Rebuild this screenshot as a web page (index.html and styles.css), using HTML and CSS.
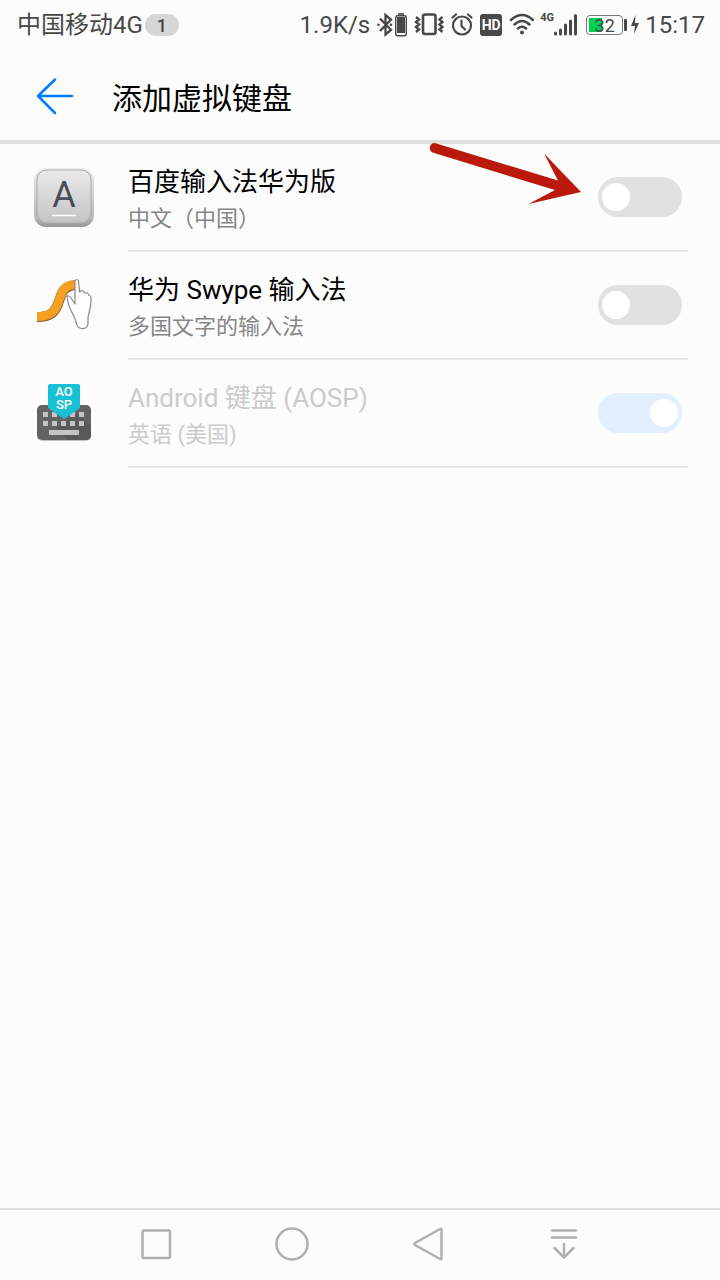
FILE: index.html
```html
<!DOCTYPE html>
<html lang="zh-CN">
<head>
    <meta charset="UTF-8" />
    <meta name="viewport" content="width=device-width, initial-scale=1.0" />
    <title>添加虚拟键盘</title>
    <link rel="stylesheet" href="styles.css">
</head>
<body>

<!-- status bar -->
<div class="statusbar">
    <span class="carrier">中国移动4G</span>
    <span class="badge">1</span>
    <div class="status-icons">
        <span>1.9K/s</span>
        <!-- bluetooth with device battery -->
        <svg width="32" height="28" viewBox="0 0 32 28">
            <path d="M4 7.500L15 19L9.500 23.500V4L15 8.500L4 20" fill="none" stroke="#484848" stroke-width="2.300"/>
            <circle cx="2.500" cy="13.700" r="1.300" fill="#484848"/>
            <circle cx="15" cy="13.700" r="1.300" fill="#484848"/>
            <rect x="19.700" y="4.700" width="10.600" height="20" rx="2" fill="#fcfcfc" stroke="#484848" stroke-width="1.400"/>
            <rect x="21" y="6" width="8" height="16" fill="#484848"/>
            <path d="M22 3h6" stroke="#484848" stroke-width="1.600"/>
        </svg>
        <!-- vibrate -->
        <svg width="30" height="28" viewBox="0 0 30 28" fill="none" stroke="#484848">
            <rect x="9" y="3.500" width="12.500" height="19.500" rx="2" stroke-width="2.600"/>
            <path d="M2 6l3 2.500-3 2.500 3 2.500-3 2.500 3 2.500-3 2.500M28.500 6l-3 2.500 3 2.500-3 2.500 3 2.500-3 2.500 3 2.500" stroke-width="2.400"/>
        </svg>
        <!-- alarm -->
        <svg width="24" height="28" viewBox="0 0 24 28" fill="none" stroke="#484848" stroke-width="2.200" stroke-linecap="round">
            <circle cx="12" cy="14.500" r="9"/>
            <path d="M2.500 6.500L6 3.500M21.500 6.500L18 3.500M11.500 9.500v5.500l3.500 3.500"/>
        </svg>
        <span class="hd">HD</span>
        <!-- wifi -->
        <svg width="26" height="28" viewBox="0 0 26 28" fill="none" stroke="#484848" stroke-width="2.500" stroke-linecap="round">
            <path d="M3 9Q14 -1 25 9M6.500 13.500Q14 6.500 21.500 13.500M10 17.500Q14 14 18 17.500"/>
            <circle cx="14" cy="21.500" r="2" fill="#484848" stroke="none"/>
        </svg>
        <div class="signal">
            <span>4G</span>
            <svg width="24" height="28" viewBox="0 0 24 28" stroke="#484848" stroke-width="3" stroke-linecap="round">
                <path d="M1.500 22v1M6.500 19v4M11.500 14v9M16.500 10v13M21.500 4.500v18.500"/>
            </svg>
        </div>
        <div class="battery">
            <span class="battery-level">32</span>
            <svg width="15" height="28" viewBox="0 0 15 28" fill="#484848">
                <rect x="0" y="8" width="3" height="12" rx="1"/>
                <path d="M11.500 4L7 15h4l-1 8 5-11h-4z"/>
            </svg>
        </div>
        <span>15:17</span>
    </div>
</div>

<header class="toolbar">
    <button class="back" aria-label="返回">
        <svg width="40" height="40" viewBox="0 0 40 40" fill="none" stroke="#007dff" stroke-width="2.500" stroke-linecap="round" stroke-linejoin="round">
            <path d="M20 3.500L3 20l17 17M3 20h34"/>
        </svg>
    </button>
    <h1>添加虚拟键盘</h1>
</header>

<main class="list">
    <!-- Baidu -->
    <div class="item">
        <svg class="item-icon" width="64" height="64" viewBox="0 0 64 64">
            <defs>
                <linearGradient id="keyEdge" x1="0" y1="0" x2="0" y2="1">
                    <stop offset="0" stop-color="#ececec"/>
                    <stop offset="0.850" stop-color="#b9b9b9"/>
                    <stop offset="1" stop-color="#959595"/>
                </linearGradient>
                <linearGradient id="keyTop" x1="0" y1="0" x2="0" y2="1">
                    <stop offset="0" stop-color="#ebebeb"/>
                    <stop offset="1" stop-color="#c3c3c4"/>
                </linearGradient>
            </defs>
            <rect x="2" y="2" width="60" height="59" rx="12" fill="url(#keyEdge)"/>
            <rect x="5" y="4" width="54" height="53" rx="10" fill="url(#keyTop)" stroke="#aaa"/>
            <text x="32" y="41" class="key-letter">A</text>
            <path d="M20 49.500h24" stroke="#fff" stroke-width="1.500"/>
        </svg>
        <label class="item-text" for="baidu">
            <span class="name">百度输入法华为版</span>
            <span class="desc">中文（中国）</span>
        </label>
        <input type="checkbox" class="switch" id="baidu">
    </div>

    <!-- Swype -->
    <div class="item">
        <svg class="item-icon" width="64" height="64" viewBox="0 0 64 64">
            <path d="M5 43c10 0 17-2 21-13C30 18 31 12 44 11" fill="none" stroke="#6e5630" stroke-width="10"/>
            <path d="M5 42.500c10 0 17-2 21-13C30 17.500 31 11 44 10.500" fill="none" stroke="#f6a021" stroke-width="9"/>
            <path d="M43 7q1.500-3 3.500 0l1 11q4-3 5 1 4-1 4 2 3 1 2.500 5c0 9-2 11-3 17v7q-1 5-6 4.500-5 0-6-6.500c-1-7-8-12-9-26q2-1 4 2l4 6z" fill="#fff" stroke="#888" stroke-width="1.200" stroke-linejoin="round"/>
        </svg>
        <label class="item-text" for="swype">
            <span class="name">华为 Swype 输入法</span>
            <span class="desc">多国文字的输入法</span>
        </label>
        <input type="checkbox" class="switch" id="swype">
    </div>

    <!-- AOSP -->
    <div class="item disabled">
        <svg class="item-icon" width="64" height="64" viewBox="0 0 64 64">
            <rect x="5" y="24" width="54" height="35" rx="5" fill="#c4c4c4"/>
            <rect x="5" y="23" width="54" height="35" rx="5" fill="#636363"/>
            <path d="M46 31L59 44v9q0 5-5 5H36L24 46z" fill="#595959"/>
            <path d="M11 32.500h5M20 32.500h5M38 32.500h5M47 32.500h5M11 41.500h5M20 41.500h5M29 41.500h5M38 41.500h5M47 41.500h5" stroke="#c4c4c4" stroke-width="5"/>
            <path d="M17 50.500h30" stroke="#c4c4c4" stroke-width="5"/>
            <path d="M16 4q0-2 2-2h28q2 0 2 2v22L32 37 16 26z" fill="#17c0d4"/>
            <text x="32" y="14" class="aosp">AO</text>
            <text x="32" y="27" class="aosp">SP</text>
        </svg>
        <label class="item-text" for="aosp">
            <span class="name">Android 键盘 (AOSP)</span>
            <span class="desc">英语 (美国)</span>
        </label>
        <input type="checkbox" class="switch" id="aosp" checked disabled>
    </div>

    <!-- arrow pointing at the first switch -->
    <svg class="pointer" width="160" height="72" viewBox="0 0 160 72" fill="#bb190b">
        <path d="M15.500 3.200L138 40.500L124 13.500L161 52L108.500 64L135 50L12.500 12.600A5 5 0 0 1 15.500 3.200z"/>
    </svg>
</main>

<!-- navigation keys -->
<nav class="navbar">
    <button aria-label="最近任务">
        <svg width="36" height="36" viewBox="0 0 36 36"><rect x="4.500" y="4.500" width="27.500" height="27.500" rx="1.500"/></svg>
    </button>
    <button aria-label="主页">
        <svg width="36" height="36" viewBox="0 0 36 36"><circle cx="18" cy="18" r="15.500"/></svg>
    </button>
    <button aria-label="返回">
        <svg width="36" height="36" viewBox="0 0 36 36"><path d="M5 17L30 3q1.500-1 1.500 1v28q0 2-1.500 1L5 19q-1.500-1 0-2z"/></svg>
    </button>
    <button aria-label="下拉通知">
        <svg width="36" height="36" viewBox="0 0 36 36"><path d="M6 4.500h24M6 11.500h24M18 18v13M8.500 22l9.500 9.500 9.500-9.500"/></svg>
    </button>
</nav>

</body>
</html>
```
FILE: styles.css
```css
* {
    box-sizing: border-box;
}

body {
    margin: 0;
    min-height: 100vh;
    display: flex;
    flex-direction: column;
    background-color: #fcfcfc;
    color: #000;
    font-family: Roboto, "Noto Sans CJK SC", sans-serif;
}

svg {
    display: block;
    flex-shrink: 0;
}

button {
    display: flex;
    align-items: center;
    justify-content: center;
    padding: 0;
    border: none;
    background: none;
    cursor: pointer;
}

/* Status bar */
.statusbar {
    display: flex;
    align-items: center;
    height: 50px;
    padding: 0 15px 0 17px;
    font-size: 24px;
    line-height: 50px;
    color: #484848;
    white-space: nowrap;
}

.badge {
    width: 34px;
    height: 22px;
    margin-left: 2px;
    border-radius: 11px;
    background-color: #d6d6d6;
    font-size: 18px;
    font-weight: 500;
    line-height: 23px;
    text-align: center;
}

.status-icons {
    display: flex;
    align-items: center;
    gap: 6px;
    margin-left: auto;
}

.hd {
    width: 22px;
    height: 22px;
    border-radius: 3px;
    background-color: #484848;
    color: #fff;
    font-size: 14px;
    font-weight: 700;
    line-height: 22px;
    text-align: center;
}

.signal {
    display: flex;
}

.signal span {
    width: 14px;
    font-size: 11px;
    font-weight: 700;
    line-height: 14px;
}

.battery {
    display: flex;
    align-items: center;
    padding-left: 2px;
}

.battery-level {
    width: 37px;
    height: 20px;
    margin-right: 1px;
    border: 1px solid #777;
    border-radius: 4px;
    background: linear-gradient(#00d150, #00d150) 2px 2px / 13px 14px no-repeat;
    font-size: 18px;
    line-height: 19px;
    text-align: center;
}

/* Header */
.toolbar {
    display: flex;
    align-items: center;
    height: 94px;
    padding: 2px 35px 0;
    border-bottom: 4px solid #e0e0e0;
}

.back {
    width: 40px;
    height: 40px;
}

.toolbar h1 {
    margin: 0 0 0 37px;
    padding-top: 6px;
    font-size: 30px;
    font-weight: 400;
    line-height: 40px;
}

/* Keyboard list */
.list {
    flex: 1;
    position: relative;
}

.item {
    display: flex;
    align-items: center;
    height: 108px;
    padding: 0 32px;
    background: linear-gradient(#e4e4e4, #e4e4e4) 128px 100% / calc(100% - 160px) 2px no-repeat;
}

.item-text {
    flex: 1;
    margin-left: 32px;
    padding-top: 4px;
}

.name, .desc {
    display: block;
}

.name {
    font-size: 26px;
    line-height: 38px;
}

.desc {
    font-size: 22px;
    line-height: 36px;
    color: #868686;
}

.disabled .name, .disabled .desc {
    color: #cbcbcb;
}

.switch {
    appearance: none;
    display: flex;
    align-items: center;
    width: 84px;
    height: 40px;
    margin: 0 6px 2px 0;
    padding: 0 4px;
    border-radius: 20px;
    background-color: #e1e1e1;
}

.switch::before {
    content: "";
    width: 28px;
    height: 28px;
    border-radius: 50%;
    background-color: #fff;
}

.switch:checked {
    justify-content: flex-end;
    background-color: #007dff;
}

.switch:checked:disabled {
    background-color: #e2effe;
}

.key-letter {
    fill: #4b4d56;
    font-size: 36px;
    text-anchor: middle;
}

.aosp {
    fill: #fff;
    font-size: 13px;
    font-weight: 500;
    text-anchor: middle;
}

.pointer {
    position: absolute;
    top: -4px;
    right: 140px;
    overflow: visible;
    pointer-events: none;
}

/* Navigation bar */
.navbar {
    display: flex;
    justify-content: center;
    gap: 100px;
    height: 72px;
    padding-bottom: 2px;
    border-top: 2px solid #e0e0e0;
}

.navbar svg {
    fill: none;
    stroke: #b0b0b0;
    stroke-width: 2.5px;
    stroke-linecap: round;
    stroke-linejoin: round;
}
```
